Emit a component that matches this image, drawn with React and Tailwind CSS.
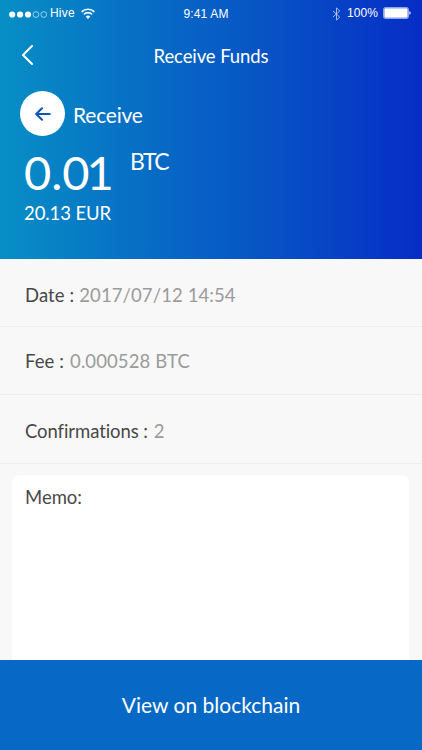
import { useState } from 'react';

const StatusBar = () => (
  <div className="flex h-[26px] items-center pl-[9px] pr-[11px] font-['Liberation_Sans',sans-serif] text-[12px] leading-none text-white">
    <div className="flex flex-1 items-center">
      <svg className="mt-[2px] h-[7px] w-[38px]" viewBox="0 0 38 7" fill="white" stroke="white">
        <circle cx="3.2" cy="3.5" r="3.1" stroke="none" />
        <circle cx="11.1" cy="3.5" r="3.1" stroke="none" />
        <circle cx="19" cy="3.5" r="3.1" stroke="none" />
        <circle cx="26.9" cy="3.5" r="2.9" fill="none" strokeWidth="0.6" />
        <circle cx="34.8" cy="3.5" r="2.9" fill="none" strokeWidth="0.6" />
      </svg>
      <span className="ml-[3px] tracking-[0.2px]">Hive</span>
      <svg className="ml-[6px] h-[11px] w-[14px]" viewBox="0 0 13 10" fill="none" stroke="white" strokeWidth="1.5">
        <path d="M0.6 3.5A8.3 8.3 0 0 1 12.4 3.5" />
        <path d="M2.7 5.8A5.4 5.4 0 0 1 10.3 5.8" />
        <path d="M6.5 10L4.4 7.8A3 3 0 0 1 8.6 7.8Z" fill="white" stroke="none" />
      </svg>
    </div>
    <span className="mr-[8px] pt-[2px] text-[12px] tracking-[0.15px]">9:41 AM</span>
    <div className="flex flex-1 items-center justify-end">
      <svg className="mt-[2px] h-[14px] w-[9px] opacity-70" viewBox="0 0 8 14" fill="none" stroke="white" strokeWidth="0.9">
        <path d="M0.5 4L7.2 10L4 13.2V0.8L7.2 4L0.5 10" />
      </svg>
      <span className="ml-[6px] tracking-[0.1px]">100%</span>
      <svg className="ml-[5px] h-[12px] w-[28px]" viewBox="0 0 28 12" fill="none">
        <rect x="0.5" y="0.5" width="25" height="11" rx="1.8" stroke="white" strokeOpacity="0.7" strokeWidth="0.8" />
        <rect x="1.3" y="1.3" width="23.4" height="9.4" rx="0.8" fill="white" />
        <path d="M26.4 4.2C28.1 4.8 28.1 7.2 26.4 7.8Z" fill="white" />
      </svg>
    </div>
  </div>
);

const NavBar = () => (
  <div className="flex h-[60px] items-center">
    <button className="ml-[21px] w-[14px]" aria-label="Back">
      <svg className="mb-[2px] h-[20px] w-[13px]" viewBox="0 0 13 20" fill="none" stroke="white" strokeWidth="2" strokeLinecap="round" strokeLinejoin="round">
        <path d="M11 1L2 10L11 19" />
      </svg>
    </button>
    <h1 className="flex-1 pr-[35px] text-center text-[18.5px] leading-6 tracking-[-0.1px]">Receive Funds</h1>
  </div>
);

const details = [
  { label: 'Date', value: '2017/07/12 14:54', row: 'h-[68px] pt-1', gap: 'ml-[5px]', text: 'tracking-[0.1px]' },
  { label: 'Fee', value: '0.000528 BTC', row: 'h-[68px]', gap: 'ml-[6px]', text: 'tracking-[0.1px]' },
  { label: 'Confirmations', value: '2', row: 'h-[69px] pt-1', gap: 'ml-[6px]', text: 'tracking-[-0.08px]' },
];

function App() {
  const [memo, setMemo] = useState('');

  return (
    <div className="flex h-[750px] w-[422px] flex-col overflow-hidden bg-[#f8f8f8] font-[Lato,sans-serif]">
      {/* Header */}
      <header className="h-[259px] bg-linear-[90deg,#078fc5_0%,#076fc5_32%,#074fc5_67%,#062dc6_100%] text-white">
        <StatusBar />
        <NavBar />
        <div className="flex items-center pl-5 pt-[5px]">
          <div className="flex size-[45px] items-center justify-center rounded-full bg-white">
            <svg className="h-[14px] w-[16px]" viewBox="0 0 16 14" fill="none" stroke="#0b56b8" strokeWidth="2" strokeLinecap="round" strokeLinejoin="round">
              <path d="M7 1.2L1.2 7L7 12.8M1.5 7H14.8" />
            </svg>
          </div>
          <span className="ml-[8px] pt-[2px] text-[21px] leading-6 tracking-[-0.2px]">Receive</span>
        </div>
        <div className="flex pl-[24px] pt-[9px]">
          <span className="w-[106px] text-[47px] leading-[54px] tracking-[-3px]">
            0<span className="mx-[3px]">.</span>01
          </span>
          <span className="pt-[2px] text-[23px] leading-7 tracking-[-1.6px]">BTC</span>
        </div>
        <p className="pl-[24px] pt-[2px] text-[18.5px] leading-6 tracking-[-0.1px]">20.13 EUR</p>
      </header>

      {/* Transaction details */}
      <dl className="text-[18.5px] leading-6">
        {details.map(({ label, value, row, gap, text }) => (
          <div key={label} className={`flex items-center border-b border-[#eeeeee] pl-[25px] ${row} ${text}`}>
            <dt className="text-[#484848]">{label} :</dt>
            <dd className={`text-[#9b9b9b] ${gap}`}>{value}</dd>
          </div>
        ))}
      </dl>

      {/* Memo */}
      <label className="ml-3 mr-[13px] mt-[11px] flex flex-1 flex-col rounded-t-[7px] bg-white pl-[13px] pt-[10px] text-[18.5px] leading-6 text-[#484848]">
        Memo:
        <textarea
          className="flex-1 resize-none outline-none"
          value={memo}
          onChange={(e) => setMemo(e.target.value)}
        />
      </label>

      <button className="h-[90px] w-full shrink-0 bg-[#0868c5] text-[21px] text-white">
        View on blockchain
      </button>
    </div>
  );
}

export default App
